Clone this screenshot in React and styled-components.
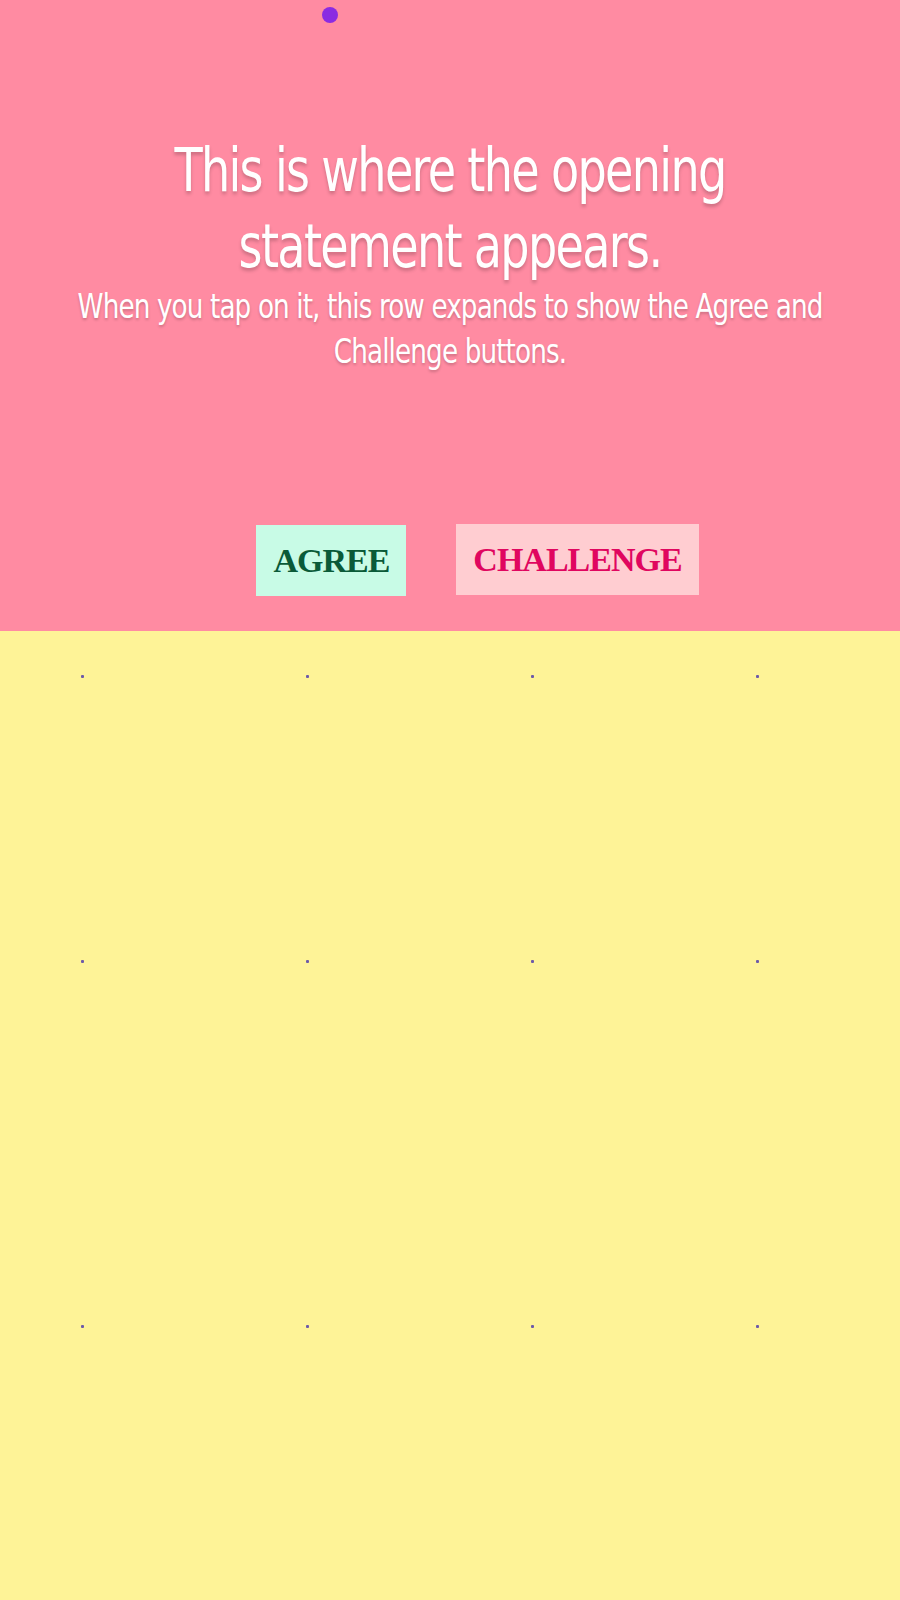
import styled, { createGlobalStyle } from "styled-components"

const GlobalStyle = createGlobalStyle`
  html, body {
    margin: 0;
    padding: 0;
    background: #fef397;
  }
`

const Page = styled.div`
  width: 900px;
  min-height: 1600px;
  display: flex;
  flex-direction: column;
  background: #fef397;
`

const Statement = styled.section`
  position: relative;
  height: 631px;
  background: #ff8ba2;
  display: flex;
  flex-direction: column;
  align-items: center;
  padding-top: 132px;
  box-sizing: border-box;
`

const Indicator = styled.span`
  position: absolute;
  top: 7px;
  left: 322px;
  width: 16px;
  height: 16px;
  border-radius: 50%;
  background: #8a2be2;
`

const Title = styled.h1`
  margin: 0;
  width: 660px;
  font-family: "DejaVu Sans Condensed", "DejaVu Sans", sans-serif;
  font-weight: 400;
  font-size: 61px;
  line-height: 76px;
  letter-spacing: -2px;
  color: #fff;
  text-align: center;
  text-shadow: 0 3px 4px rgba(0, 0, 0, 0.2);
  transform: scaleX(0.84);
`

const Subtitle = styled.p`
  margin: 0;
  width: 860px;
  font-family: "DejaVu Sans Condensed", "DejaVu Sans", sans-serif;
  font-size: 33px;
  line-height: 45px;
  letter-spacing: -1px;
  color: #fff;
  text-align: center;
  text-shadow: 0 2px 3px rgba(0, 0, 0, 0.2);
  transform: scaleX(0.885);
`

const Actions = styled.div`
  margin-top: auto;
  margin-bottom: 35px;
  margin-left: 55px;
  display: flex;
  gap: 50px;
  align-items: center;
`

const ActionButton = styled.button`
  border: none;
  border-radius: 0;
  padding: 14px 17px;
  margin-top: ${(p) => (p.$agree ? "2px" : "0")};
  font-family: "Liberation Serif", "Times New Roman", serif;
  font-weight: 700;
  font-size: 34px;
  line-height: 43px;
  letter-spacing: -1px;
  background: ${(p) => (p.$agree ? "#c8fbe6" : "#ffcdd1")};
  color: ${(p) => (p.$agree ? "#0a5a38" : "#e0065f")};
  cursor: pointer;
`

const Board = styled.section`
  flex: 1;
  display: grid;
  grid-template-columns: repeat(4, 225px);
  grid-template-rows: 285px 365px 1fr;
`

const Cell = styled.div`
  padding: 44px 0 0 81px;
`

const Pin = styled.span`
  display: block;
  width: 3px;
  height: 3px;
  border-radius: 1px;
  background: #6d5aa8;
`

export default function App() {
  const cells = Array.from({ length: 12 })
  return (
    <>
      <GlobalStyle />
      <Page>
        <Statement>
          <Indicator />
          <Title>This is where the opening statement appears.</Title>
          <Subtitle>
            When you tap on it, this row expands to show the Agree and Challenge buttons.
          </Subtitle>
          <Actions>
            <ActionButton $agree>AGREE</ActionButton>
            <ActionButton>CHALLENGE</ActionButton>
          </Actions>
        </Statement>
        <Board>
          {cells.map((_, i) => (
            <Cell key={i}>
              <Pin />
            </Cell>
          ))}
        </Board>
      </Page>
    </>
  )
}
